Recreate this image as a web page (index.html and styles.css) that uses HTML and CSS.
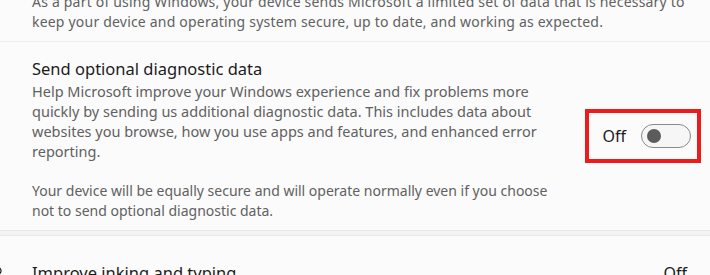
FILE: index.html
```html
<!DOCTYPE html>
<html>
<head>
	<meta charset="utf-8">
	<title>Diagnostics &amp; feedback</title>
	<link rel="stylesheet" href="styles.css">
</head>
<body>
	<div class="card">
		<div class="intro">
			As a part of using Windows, your device sends Microsoft a limited set of data that is necessary to
			keep your device and operating system secure, up to date, and working as expected.
		</div>
		<div class="divider"></div>
		<div class="option">
			<div class="text">
				<div class="title">Send optional diagnostic data</div>
				<div class="desc">Help Microsoft improve your Windows experience and fix problems more quickly by sending us additional diagnostic data. This includes data about websites you browse, how you use apps and features, and enhanced error reporting.</div>
				<div class="note">Your device will be equally secure and will operate normally even if you choose not to send optional diagnostic data.</div>
			</div>
			<div class="control highlight">
				<span class="state">Off</span>
				<span class="toggle"><span class="knob"></span></span>
			</div>
		</div>
	</div>
	<div class="gap"></div>
	<div class="card next">
		<div class="option">
			<svg class="icon" width="20" height="20" viewBox="0 0 20 20">
				<path d="M2 4 C8 4 9 10 3 12" fill="none" stroke="#1b1b1b" stroke-width="1.2"/>
			</svg>
			<div class="text">
				<div class="title">Improve inking and typing</div>
			</div>
			<div class="control">
				<span class="state">Off</span>
			</div>
		</div>
	</div>
</body>
</html>
```

FILE: styles.css
```css
body {
	margin: 0;
	background-color: #fbfbfb;
	font-family: "Noto Sans", "Open Sans", Sans-Serif;
	color: #1b1b1b;
	overflow: hidden;
}

.card {
	background-color: #fbfbfb;
	padding: 0 9px 9px 32px;
	border-bottom: 1px solid #e8e8e8;
}

.intro {
	margin-top: -8px;
	margin-right: -9px;
	font-size: 14px;
	line-height: 20px;
	letter-spacing: 0.2px;
	color: #616161;
}

.divider {
	height: 1px;
	background-color: #ededed;
	margin: 9px -9px 0 -32px;
}

.option {
	display: flex;
	align-items: center;
	padding-top: 15px;
}

.text {
	flex: 1;
}

.title {
	font-size: 16.5px;
	line-height: 24px;
	color: #1b1b1b;
}

.desc, .note {
	font-size: 14.5px;
	line-height: 20px;
	color: #616161;
	max-width: 520px;
}

.note {
	margin-top: 20px;
	font-size: 14px;
	max-width: 540px;
}

.control {
	display: flex;
	align-items: center;
}

.state {
	font-size: 16px;
	color: #1b1b1b;
}

.highlight {
	height: 46px;
	border: 4px solid #ee1b1b;
	padding: 0 6px 0 13px;
	margin-top: -7px;
}

.toggle {
	display: flex;
	align-items: center;
	width: 48px;
	height: 22px;
	margin-left: 15px;
	border: 1px solid #8a8a8a;
	border-radius: 12px;
	background-color: #f6f6f6;
}

.knob {
	width: 14px;
	height: 14px;
	margin-left: 5px;
	border-radius: 50%;
	background-color: #5c5c5c;
}

.gap {
	height: 4px;
	background-color: #f3f3f3;
	border-bottom: 1px solid #e8e8e8;
}

.next {
	border-bottom: none;
}

.next .option {
	padding-top: 25px;
}

.next .icon {
	margin-left: -38px;
	margin-right: 18px;
}

.next .control {
	margin-right: 14px;
}
```
